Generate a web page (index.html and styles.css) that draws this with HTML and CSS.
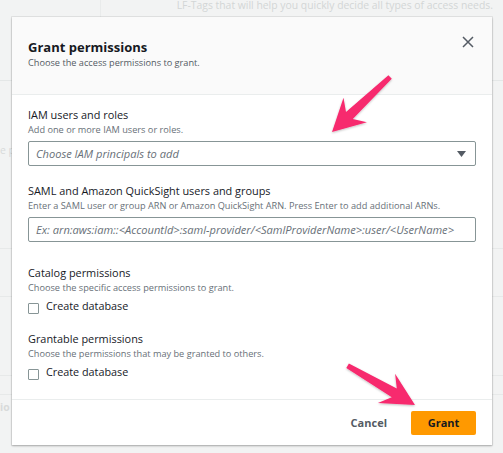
FILE: index.html
```html
<!DOCTYPE html>
<html>
<head>
<meta charset="utf-8">
<link rel="stylesheet" href="styles.css">
</head>
<body>
<div class="backdrop">
  <div class="bg-top">
    <div class="bg-left"></div>
    <div class="bg-hint">LF-Tags that will help you quickly decide all types of access needs.</div>
  </div>
  <div class="bg-row bg-r1"><span class="bg-frag">e p</span></div>
  <div class="bg-row bg-r2"></div>
  <div class="bg-row bg-r3"></div>
  <div class="bg-row bg-r4"><span class="bg-frag bold">io</span></div>
</div>

<div class="modal">
  <div class="modal-header">
    <div class="titles">
      <h2 class="title">Grant permissions</h2>
      <p class="subtitle">Choose the access permissions to grant.</p>
    </div>
    <button class="close" aria-label="Close">
      <svg width="12" height="12" viewBox="0 0 12 12"><path d="M1 1 L11 11 M11 1 L1 11" stroke="#545b64" stroke-width="1.5" fill="none"/></svg>
    </button>
  </div>
  <div class="modal-body">
    <div class="field">
      <div class="label">IAM users and roles</div>
      <div class="desc">Add one or more IAM users or roles.</div>
      <div class="select">
        <span class="placeholder">Choose IAM principals to add</span>
        <svg class="caret" width="9" height="6" viewBox="0 0 9 6"><path d="M0 0 H9 L4.5 6 Z" fill="#545b64"/></svg>
      </div>
    </div>
    <div class="field">
      <div class="label">SAML and Amazon QuickSight users and groups</div>
      <div class="desc">Enter a SAML user or group ARN or Amazon QuickSight ARN. Press Enter to add additional ARNs.</div>
      <div class="input"><span class="placeholder">Ex: arn:aws:iam::&lt;AccountId&gt;:saml-provider/&lt;SamlProviderName&gt;:user/&lt;UserName&gt;</span></div>
    </div>
    <div class="field gap-lg">
      <div class="label">Catalog permissions</div>
      <div class="desc">Choose the specific access permissions to grant.</div>
      <label class="check"><span class="box"></span>Create database</label>
    </div>
    <div class="field">
      <div class="label">Grantable permissions</div>
      <div class="desc">Choose the permissions that may be granted to others.</div>
      <label class="check"><span class="box"></span>Create database</label>
    </div>
  </div>
  <div class="modal-footer">
    <button class="btn-link">Cancel</button>
    <button class="btn-primary">Grant</button>
  </div>
</div>

<svg class="arrows" width="503" height="453" viewBox="0 0 503 453">
  <defs>
    <filter id="sh" x="-20%" y="-20%" width="140%" height="140%">
      <feDropShadow dx="0" dy="1" stdDeviation="1" flood-color="#000" flood-opacity="0.25"/>
    </filter>
  </defs>
  <polygon filter="url(#sh)" fill="#f7296e" points="332,132 366.9,122.3 352.8,119.1 391.8,78.8 388.4,75.2 346.0,111.9 343.5,97.7"/>
  <polygon filter="url(#sh)" fill="#f7296e" points="415,405 395.1,373.7 396.8,388.6 348.9,363.6 346.3,368.0 391.8,397.2 377.9,403.1"/>
</svg>
</body>
</html>
```

FILE: styles.css
```css
* { box-sizing: border-box; }
html, body { margin: 0; padding: 0; }
body {
  width: 503px;
  height: 453px;
  overflow: hidden;
  background: #f2f3f3;
  font-family: "Open Sans", "Liberation Sans", sans-serif;
  color: #16191f;
  position: relative;
}

.backdrop { width: 503px; height: 453px; }
.bg-top {
  display: flex;
  height: 81px;
  border-bottom: 1px solid #e4e7e7;
}
.bg-left { width: 101px; border-right: 1px solid #e9ebeb; }
.bg-hint {
  flex: 1;
  text-align: right;
  padding-right: 10px;
  font-size: 10.4px;
  line-height: 13px;
  margin-top: -1px;
  color: #d3d6d6;
  white-space: nowrap;
}
.bg-row { height: 32px; border-bottom: 1px solid #e7e9e9; position: relative; }
.bg-r1 { height: 168px; padding-top: 56px; }
.bg-r2 { height: 48px; }
.bg-r3 { height: 79px; }
.bg-r4 { height: 14px; border-bottom: 1px solid #e7e9e9; padding-top: 18px; }
.bg-frag { font-size: 10.4px; color: #d8dada; }
.bg-frag.bold { font-weight: 700; }

.modal {
  position: absolute;
  left: 12px;
  top: 17px;
  width: 480px;
  height: 428px;
  background: #ffffff;
  display: flex;
  flex-direction: column;
  box-shadow: 0 1px 2px rgba(0,0,0,0.28), 0 0 0 1px rgba(0,0,0,0.06);
}

.modal-header {
  flex-shrink: 0;
  background: #fafafa;
  height: 78px;
  border-bottom: 1px solid #eaeded;
  display: flex;
  justify-content: space-between;
  align-items: flex-start;
  padding: 22px 18px 0 16px;
}
.title {
  margin: 0;
  font-size: 13px;
  line-height: 16px;
  font-weight: 700;
  color: #16191f;
}
.subtitle {
  margin: 1.5px 0 0 0;
  font-size: 9.2px;
  line-height: 12px;
  color: #545b64;
}
.close {
  border: 0;
  background: none;
  padding: 0;
  width: 12px;
  height: 12px;
  margin-top: -3px;
  display: block;
}
.close svg { display: block; }

.modal-body {
  flex: 1;
  min-height: 0;
  padding: 12px 16px 0 16px;
  display: flex;
  flex-direction: column;
}
.field { display: flex; flex-direction: column; margin-bottom: 17px; }
.field.gap-lg { margin-top: 6px; }
.label { font-size: 10.9px; line-height: 16px; color: #16191f; }
.desc { font-size: 9.2px; line-height: 12px; color: #687078; margin-top: 1px; }

.select, .input {
  flex-shrink: 0;
  margin-top: 5px;
  height: 25px;
  border: 1px solid #879596;
  border-radius: 2px;
  display: flex;
  align-items: center;
  justify-content: space-between;
  padding: 0 9px 0 7px;
}
.placeholder {
  font-style: italic;
  font-size: 11.1px;
  color: #687078;
  white-space: nowrap;
}
.caret { display: block; }

.check {
  display: flex;
  align-items: flex-start;
  font-size: 10.8px;
  line-height: 16px;
  color: #16191f;
  margin-top: 4px;
}
.box {
  width: 11px;
  height: 11px;
  border: 1px solid #879596;
  border-radius: 1px;
  margin-right: 7px;
  margin-top: 5px;
  background: #fff;
}

.modal-footer {
  flex-shrink: 0;
  height: 46px;
  border-top: 1px solid #eaeded;
  display: flex;
  justify-content: flex-end;
  align-items: center;
  padding: 0 16px 0 16px;
  gap: 24px;
}
.btn-link {
  border: 0;
  background: none;
  font-family: inherit;
  font-weight: 700;
  font-size: 11px;
  color: #545b64;
  padding: 0;
}
.btn-primary {
  border: 0;
  background: #ff9900;
  border-radius: 2px;
  font-family: inherit;
  font-weight: 700;
  font-size: 11px;
  color: #16191f;
  width: 65px;
  height: 24px;
  padding: 0;
}

.arrows { position: absolute; left: 0; top: 0; pointer-events: none; }
```
